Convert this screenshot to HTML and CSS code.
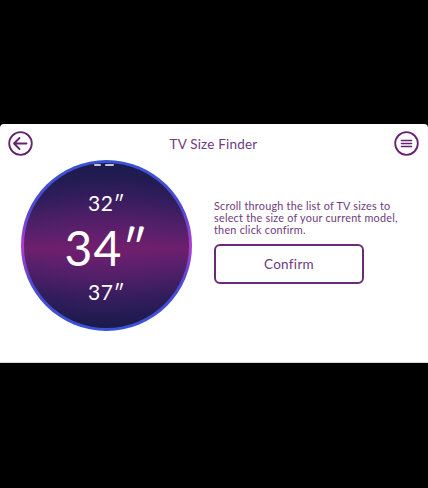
FILE: index.html
```html
<!DOCTYPE html>
<html>
<head>
<meta charset="utf-8">
<link rel="stylesheet" href="styles.css">
</head>
<body>
<div class="panel">
  <div class="header">
    <svg class="icon" width="25" height="25" viewBox="0 0 25 25">
      <circle cx="12.5" cy="12.5" r="11.3" fill="none" stroke="#66226f" stroke-width="1.8"/>
      <path d="M6 12.5 H18.5 M11.5 7 L6 12.5 L11.5 18" fill="none" stroke="#66226f" stroke-width="1.8" stroke-linecap="round" stroke-linejoin="round"/>
    </svg>
    <div class="title">TV Size Finder</div>
    <svg class="icon menu" width="25" height="25" viewBox="0 0 25 25">
      <circle cx="12.5" cy="12.5" r="11.3" fill="none" stroke="#66226f" stroke-width="1.8"/>
      <path d="M7.5 9.5 H17.5 M7.5 12.5 H17.5 M7.5 15.5 H17.5" fill="none" stroke="#66226f" stroke-width="1.6" stroke-linecap="round"/>
    </svg>
  </div>
  <div class="content">
    <div class="dial">
      <div class="dial-inner">
        <span class="peek"></span><span class="peek"></span>
        <div class="size small">32″</div>
        <div class="size big">34″</div>
        <div class="size small">37″</div>
      </div>
    </div>
    <div class="side">
      <p class="hint">Scroll through the list of TV sizes to select the size of your current model, then click confirm.</p>
      <button class="confirm">Confirm</button>
    </div>
  </div>
</div>
</body>
</html>
```
FILE: styles.css
```css
html, body {
  margin: 0;
  padding: 0;
  background: #000;
  font-family: "Lato", "Open Sans", sans-serif;
}
.panel {
  margin-top: 124px;
  height: 238px;
  background: #fff;
  border-bottom: 1px solid #d8d8d8;
  border-radius: 4px 4px 0 0;
}
.header {
  display: grid;
  grid-template-columns: 1fr auto 1fr;
  align-items: center;
  padding: 7px 9px 0 8px;
  height: 25px;
}
.icon { display: block; }
.icon.menu { justify-self: end; }
.title {
  color: #6f3a7f;
  font-size: 13.5px;
  letter-spacing: 0.2px;
}
.content {
  display: flex;
  padding-left: 21px;
  margin-top: 4px;
}
.dial {
  width: 171px;
  height: 171px;
  border-radius: 50%;
  padding: 3px;
  box-sizing: border-box;
  background: linear-gradient(to bottom, #3a52d6 0%, #4f4ad4 28%, #b03ccc 50%, #4f4ad4 72%, #3a52d6 100%);
  flex: none;
}
.dial-inner {
  position: relative;
  width: 100%;
  height: 100%;
  border-radius: 50%;
  background:
    radial-gradient(ellipse 70% 45% at 50% 52%, rgba(120,30,110,0.5), rgba(120,30,110,0) 100%),
    linear-gradient(to bottom, #1c1a4c 0%, #2a1d5a 22%, #50206b 42%, #6b1f6d 52%, #50206b 62%, #2a1d5a 80%, #1b1a4c 100%);
  display: flex;
  flex-direction: column;
  align-items: center;
  color: #fff;
  overflow: hidden;
}
.peek {
  position: absolute;
  top: 1px;
  height: 2px;
  width: 7px;
  background: rgba(255,255,255,0.75);
  border-radius: 1px;
}
.peek:first-child { left: 70px; }
.peek:nth-child(2) { left: 81px; width: 9px; }
.size { line-height: 1; }
.small {
  font-size: 21px;
  letter-spacing: 0.5px;
}
.size:nth-of-type(1) { margin-top: 29px; }
.big {
  font-size: 48px;
  margin-top: 11px;
  letter-spacing: 1px;
}
.size:nth-of-type(3) { margin-top: 9px; }
.side {
  margin-left: 22px;
  padding-top: 40px;
  display: flex;
  flex-direction: column;
}
.hint {
  margin: 0;
  width: 186px;
  color: #6d3a7d;
  font-size: 10.8px;
  line-height: 12px;
  letter-spacing: 0.25px;
}
.confirm {
  margin-top: 8px;
  width: 150px;
  height: 40px;
  border: 2px solid #6a2a78;
  border-radius: 6px;
  background: #fff;
  color: #6d3a7d;
  font-family: inherit;
  font-size: 13.5px;
  letter-spacing: 0.3px;
  padding: 0;
}
```
